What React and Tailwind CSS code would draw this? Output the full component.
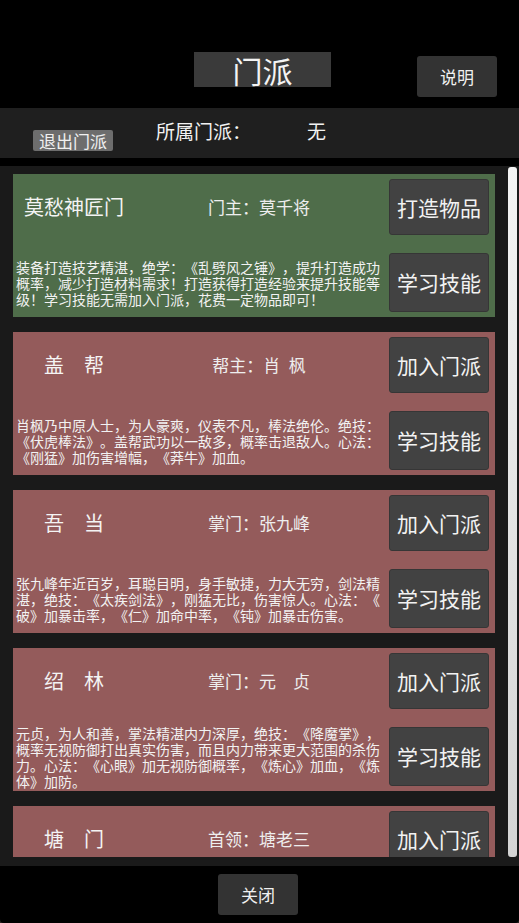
import React from 'react'

const sects = [
  {
    name: '莫愁神匠门',
    leader: '门主：莫千将',
    action: '打造物品',
    green: true,
    lines: [
      '装备打造技艺精湛，绝学：《乱劈风之锤》，提升打造成功',
      '概率，减少打造材料需求！打造获得打造经验来提升技能等',
      '级！学习技能无需加入门派，花费一定物品即可！',
    ],
  },
  {
    name: '盖　帮',
    leader: '帮主：肖\u2002枫',
    action: '加入门派',
    lines: [
      '肖枫乃中原人士，为人豪爽，仪表不凡，棒法绝伦。绝技：',
      '《伏虎棒法》。盖帮武功以一敌多，概率击退敌人。心法：',
      '《刚猛》加伤害增幅，《莽牛》加血。',
    ],
  },
  {
    name: '吾　当',
    leader: '掌门：张九峰',
    action: '加入门派',
    lines: [
      '张九峰年近百岁，耳聪目明，身手敏捷，力大无穷，剑法精',
      '湛，绝技：《太疾剑法》，刚猛无比，伤害惊人。心法：《',
      '破》加暴击率，《仁》加命中率，《钝》加暴击伤害。',
    ],
  },
  {
    name: '绍　林',
    leader: '掌门：元　贞',
    action: '加入门派',
    lines: [
      '元贞，为人和善，掌法精湛内力深厚，绝技：《降魔掌》，',
      '概率无视防御打出真实伤害，而且内力带来更大范围的杀伤',
      '力。心法：《心眼》加无视防御概率，《炼心》加血，《炼',
      '体》加防。',
    ],
  },
  // last card is cut off by the scroll viewport, only its top row shows
  {
    name: '塘　门',
    leader: '首领：塘老三',
    action: '加入门派',
    lines: null,
  },
]

function GameButton({ children, className = '' }) {
  return (
    <button className={`w-[100px] flex items-center justify-center bg-[#424242] border border-[#363636] rounded-[3px] text-[21px] leading-none text-[#f2f2f2] whitespace-nowrap ${className}`}>
      {children}
    </button>
  )
}

function SectCard({ sect }) {
  return (
    <div className={`w-[482px] h-[143px] shrink-0 flex flex-col py-[5px] pr-[6px] ${sect.green ? 'bg-[#4f6d4a]' : 'bg-[#945b5b]'}`}>
      <div className="flex h-[56px]">
        <div className="w-[122px] flex items-center justify-center text-[20px] text-[#f4f4f4] whitespace-nowrap">{sect.name}</div>
        <div className="w-[248px] flex items-center justify-center text-[17px] text-[#eeeeee] whitespace-nowrap">{sect.leader}</div>
        <GameButton className="ml-auto h-[56px]">{sect.action}</GameButton>
      </div>
      {sect.lines && (
        <div className="flex h-[59px] mt-[18px]">
          <div className="flex-1 flex flex-col justify-center pl-[3px] text-[14px] leading-[16px] text-[#f2f2f2] whitespace-nowrap">
            {sect.lines.map((l, i) => <div key={i}>{l}</div>)}
          </div>
          <GameButton className="h-[59px]">学习技能</GameButton>
        </div>
      )}
    </div>
  )
}

export default function App() {
  return (
    <div className="w-[519px] h-[923px] bg-[#2a2622] overflow-hidden [font-family:'Noto_Sans_CJK_SC','Noto_Sans',sans-serif] [text-spacing-trim:space-all]">
      <div className="h-full flex flex-col bg-black rounded-b-[4px] overflow-hidden">
        {/* header */}
        <div className="h-[108px] shrink-0 flex items-start">
          <div className="ml-[194px] mt-[52px] w-[137px] h-[35px] bg-[#3a3a3a] flex items-center justify-center text-[30px] leading-none text-[#f4f4f4]">门派</div>
          <button className="ml-auto mr-[22px] mt-[56px] w-[80px] h-[41px] bg-[#333333] rounded-[3px] text-[17px] text-[#f0f0f0]">说明</button>
        </div>

        {/* current sect bar */}
        <div className="h-[50px] shrink-0 bg-[#1f1f1f] flex items-start">
          <button className="ml-[33px] mt-[22px] w-[80px] h-[21px] bg-[#6d6d6d] rounded-[2px] text-[17px] leading-[21px] text-[#f0f0f0] whitespace-nowrap">退出门派</button>
          <span className="ml-[43px] mt-[12px] text-[19px] leading-[22px] text-[#f2f2f2] whitespace-nowrap">所属门派：</span>
          <span className="ml-[56px] mt-[12px] text-[19px] leading-[22px] text-[#f2f2f2]">无</span>
        </div>

        {/* sect list */}
        <div className="mt-[8px] h-[700px] shrink-0 bg-[#1a1a1a] pt-[1px] pb-[9px] flex">
          <div className="flex-1 h-[690px] overflow-hidden px-[13px] pt-[7px] flex flex-col gap-[15px]">
            {sects.map((s) => <SectCard key={s.name} sect={s} />)}
          </div>
          <div className="w-[9px] h-[690px] mr-[2px] rounded-[3px] bg-gradient-to-b from-[#f4f4f4] to-[#d4d4d4]" />
        </div>

        {/* footer */}
        <div className="flex-1 flex items-start justify-center">
          <button className="mt-[8px] ml-[-3px] w-[80px] h-[41px] bg-[#333333] rounded-[3px] text-[17px] text-[#f0f0f0]">关闭</button>
        </div>
      </div>
    </div>
  )
}
